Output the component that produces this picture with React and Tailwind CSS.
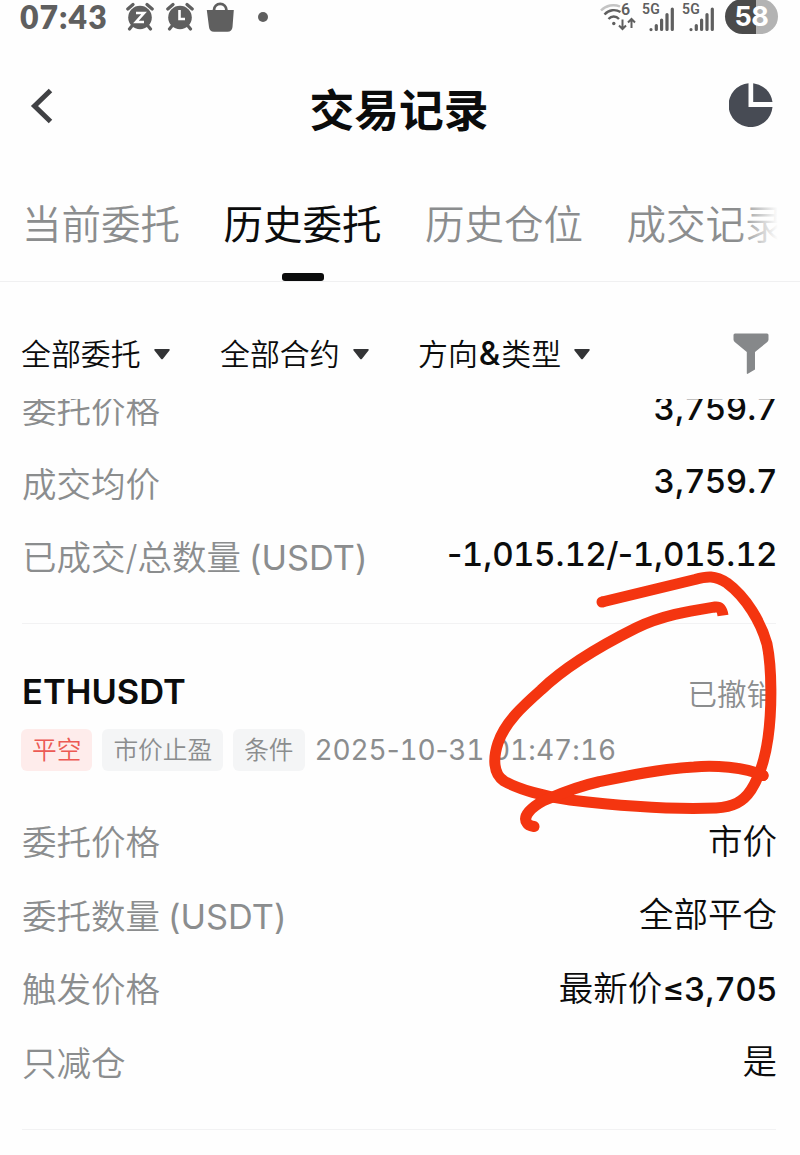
import React from 'react';

const tabs = [
  { label: '当前委托', active: false },
  { label: '历史委托', active: true },
  { label: '历史仓位', active: false },
  { label: '成交记录', active: false },
];

const filters = [
  { label: '全部委托', className: 'w-[199px]' },
  { label: '全部合约', className: 'w-[198px]' },
  { label: <>方向<b className="px-px text-[33px] leading-[36px] font-medium">&amp;</b>类型</>, className: '' },
];

const AlarmIcon = ({ children }) => (
  <svg width="28" height="32" viewBox="0 0 28 32" fill="none" stroke="#5f5f5f">
    <circle cx="14" cy="17.500" r="11.800" fill="#5f5f5f" stroke="none" />
    <path d="M1.800 9 7 4.500M26.200 9 21 4.500M5.500 26.500 3.500 29M22.500 26.500l2 2.500" strokeWidth="3.200" strokeLinecap="round" />
    {children}
  </svg>
);

const Signal = () => (
  <span className="relative block w-[34px] h-[30px]">
    <span className="absolute left-0 -top-[2px] text-[14px] leading-[16px] font-['Roboto'] font-semibold tracking-[0.3px]">5G</span>
    <svg className="absolute left-[7px] top-[3px]" width="26" height="26" viewBox="0 0 26 26" stroke="#5f5f5f" strokeWidth="3.200" strokeLinecap="round">
      <path d="M2 23.500v.1M7.300 19.500v4M12.600 14v9.500M18 8.500v15M23.300 3v20.500" />
    </svg>
  </span>
);

const StatusBar = () => (
  <div className="h-9 flex items-start justify-between pl-5 pr-[22px] text-[#5f5f5f]">
    <div className="flex items-start">
      <span className="w-[106px] text-[32px] leading-[34px] font-['Lato'] font-extrabold tracking-[1px] whitespace-nowrap">07:43</span>
      <AlarmIcon>
        <path d="M10 13h8l-8 9h8" stroke="#fff" strokeWidth="2.600" />
      </AlarmIcon>
      <span className="w-3" />
      <AlarmIcon>
        <path d="M13.500 10v9H19" stroke="#fff" strokeWidth="2.600" />
      </AlarmIcon>
      <svg className="ml-3" width="30" height="34" viewBox="0 0 30 34">
        <path d="M8 12V10a6.200 6.200 0 0 1 12.400 0V12" fill="none" stroke="#5f5f5f" strokeWidth="2.800" />
        <path d="M.8 10h27l-1.300 17c-.3 3-2 4.800-5 4.800H8c-3 0-4.700-1.800-5-4.800z" fill="#5f5f5f" />
      </svg>
      <span className="ml-[22px] mt-3 size-[10px] rounded-full bg-[#5f5f5f]" />
    </div>
    <div className="flex items-start">
      <span className="relative block w-[42px] h-[34px]">
        <svg width="38" height="34" viewBox="0 0 38 34" fill="none" stroke="#5f5f5f" strokeWidth="2.400">
          <path d="M1 10.500C6 5 14 4 20 6.500" stroke="#c4c4c4" />
          <path d="M4.500 14.500c4.500-5 11-5.500 16-2.500M8.500 19c3-3.300 7.500-3.300 10.500 0" />
          <circle cx="13.800" cy="23.500" r="1.700" fill="#5f5f5f" stroke="none" />
          <path d="M22.500 19.500v9M19 25.500l3.500 3.500 3.500-3.500M31.500 28v-9M28 22.500l3.500-3.500 3.500 3.500" strokeWidth="2" />
        </svg>
        <span className="absolute left-[21px] top-px text-[16px] leading-[18px] font-['Roboto'] font-semibold">6</span>
      </span>
      <span className="mt-[3px]"><Signal /></span>
      <span className="ml-[6px] mt-[3px]"><Signal /></span>
      <span className="ml-[9px] -mt-[1px] w-[53px] h-[35px] rounded-full bg-linear-to-r from-[#4b4b4b] from-58% to-[#b3b3b3] to-58% text-white text-[27px] leading-[35px] tracking-[-0.500px] font-bold text-center">58</span>
    </div>
  </div>
);

const Header = () => (
  <header className="h-36 flex items-center justify-between pl-[30px] pr-[27px]">
    <svg className="-mt-1" width="39" height="36" viewBox="0 0 39 36" fill="none" stroke="#404144" strokeWidth="5">
      <path d="M20.500 2.500 4.500 18l16 15.500" />
    </svg>
    <h1 className="pt-[5px] text-[44.800px] leading-[60px] font-bold text-[#0b0c0c]">交易记录</h1>
    <svg className="-mt-1.5" width="44" height="44" viewBox="0 0 44 44" fill="#474b54">
      <path d="M19.500.2A22 22 0 1 0 43.500 24h-24z" />
      <path d="M24.200.2A22 22 0 0 1 43.500 19H24.200z" />
    </svg>
  </header>
);

const Tabs = () => (
  <nav className="relative h-[102px] border-b border-[#f0f0f1] overflow-hidden">
    <div className="h-full flex gap-[43.500px] pl-[22px]">
      {tabs.map(({ label, active }) => (
        <div
          key={label}
          className={`shrink-0 h-full flex flex-col items-center justify-between pt-[15px] text-[39.500px] leading-[60px] ${
            active ? 'text-[#0b0c0c] font-normal' : 'text-[#8b8d8e] font-[350]'
          }`}
        >
          {label}
          {active && <span className="w-[42px] h-2 rounded-[3px] bg-[#0b0c0c]" />}
        </div>
      ))}
    </div>
    <div className="absolute right-[22px] top-0 w-10 h-[90px] bg-linear-to-r from-[#fefefe]/0 to-[#fefefe]" />
    <div className="absolute right-0 top-0 w-[22px] h-[90px] bg-[#fefefe]" />
  </nav>
);

const Filters = () => (
  <div className="h-[117px] pt-7 pb-px pl-[21px] pr-[31px] flex items-center text-[#0b0c0c]">
    {filters.map(({ label, className }, i) => (
      <button key={i} className={`flex items-center gap-[13px] text-[29.900px] leading-[40px] font-[350] whitespace-nowrap ${className}`}>
        <span>{label}</span>
        <svg width="16" height="11" viewBox="0 0 16 11" fill="#333436">
          <path d="M1.200 0h13.600c1 0 1.300.8.700 1.500L9 9.800c-.6.700-1.400.7-2 0L.5 1.500C-.1.800.2 0 1.200 0z" />
        </svg>
      </button>
    ))}
    <svg className="ml-auto" width="36" height="42" viewBox="0 0 36 42" fill="#86888a">
      <path d="M2 .5h32a1.500 1.500 0 0 1 1.500 1.500v4.500c0 1-.4 1.800-1.200 2.500L22 19v17.500l-7.200 4.300c-.6.300-1 0-1-.6V19L1.700 9C.9 8.300.5 7.500.5 6.500V2A1.500 1.500 0 0 1 2 .5z" />
    </svg>
  </div>
);

// Tabular digits, proportional punctuation
const Digits = ({ className, children }) => (
  <span className={className}>
    {children.split(/(\d+)/).map((part, i) => (
      <span key={i} className={i % 2 ? 'tabular-nums' : ''}>{part}</span>
    ))}
  </span>
);

const Row = ({ label, unit, value, number }) => (
  <div className="h-[73.400px] flex items-center justify-between whitespace-nowrap">
    <span className="pt-[3px] text-[34.500px] leading-[50px] font-[350] text-[#8b8d8e]">
      {label}
      {unit && <span className="ml-2 text-[34.300px] font-normal">{unit}</span>}
    </span>
    <span className={`-mr-px text-[34.500px] leading-[50px] font-[350] text-[#0b0c0c] ${value ? '' : 'pb-[4px]'}`}>
      {value}
      {number && <Digits className="text-[33.200px] font-medium tracking-[-0.600px]">{number}</Digits>}
    </span>
  </div>
);

const Tag = ({ className, children }) => (
  <span className={`h-[42px] px-[11px] rounded-md text-[24.700px] leading-[42px] font-[350] ${className}`}>{children}</span>
);

// Hand drawn red circle around the order status
const Marker = () => (
  <svg
    className="absolute left-[480px] top-[560px] pointer-events-none"
    width="310"
    height="280"
    viewBox="480 560 310 280"
    fill="none"
    stroke="#f43510"
    strokeWidth="11"
    strokeLinejoin="round"
  >
    <path d="M602 602 695 579.500C707 576 715 575 727 583C746 597 761 622 767 644C772 668 772 710 768 738C765 759 760 776 751 790C743 802 733 807 716 808C680 809.500 625 806.500 570 800C545 797 518 789 504 781C493 774 493 758 498 743C505 722 523 706 541 690C568 664 606 643 636 628C663 615 690 611 715 607C720 606.500 722 609 723 615.500" />
    <path d="M602 602h.1M763 775.500h.1" strokeLinecap="round" />
    <path d="M763 775.500C745 767 713 765 694 767C660 769 627 776 598 782C575 787 555 796 543 801C532 807 522 816 527 823C528 825 531 826 534 826.500" strokeLinecap="round" />
  </svg>
);

export default function App() {
  return (
    <div className="relative w-[800px] h-[1155px] overflow-hidden bg-[#fefefe] font-['Inter','Noto_Sans_CJK_SC',sans-serif]">
      <StatusBar />
      <Header />
      <Tabs />
      <Filters />

      <main className="px-[22px] pr-6 overflow-hidden">
        <section className="-mt-[26px] pb-[30px]">
          <Row label="委托价格" number="3,759.7" />
          <Row label="成交均价" number="3,759.7" />
          <Row label="已成交/总数量" unit="(USDT)" number="-1,015.12/-1,015.12" />
        </section>

        <section className="border-y border-[#f2f2f3] pt-[43px] pb-[30px]">
          <div className="h-[50px] flex items-center justify-between">
            <h2 className="text-[34.500px] leading-[50px] font-semibold text-[#0b0c0c]">ETHUSDT</h2>
            <span className="pt-1 text-[29.500px] leading-[50px] font-[350] text-[#8b8d8e]">已撤销</span>
          </div>
          <div className="mt-3 mb-[34px] -ml-px flex items-center gap-[10px] whitespace-nowrap">
            <Tag className="bg-[#feeceb] text-[#ec5a54]">平空</Tag>
            <Tag className="bg-[#f4f5f6] text-[#8b8d8e]">市价止盈</Tag>
            <Tag className="bg-[#f4f5f6] text-[#8b8d8e]">条件</Tag>
            <Digits className="text-[28px] leading-[42px] tracking-[-0.140px] text-[#8b8d8e]">2025-10-31 01:47:16</Digits>
          </div>
          <Row label="委托价格" value="市价" />
          <Row label="委托数量" unit="(USDT)" value="全部平仓" />
          <Row label="触发价格" value="最新价" number="≤3,705" />
          <Row label="只减仓" value="是" />
        </section>
      </main>

      <Marker />
    </div>
  );
}
